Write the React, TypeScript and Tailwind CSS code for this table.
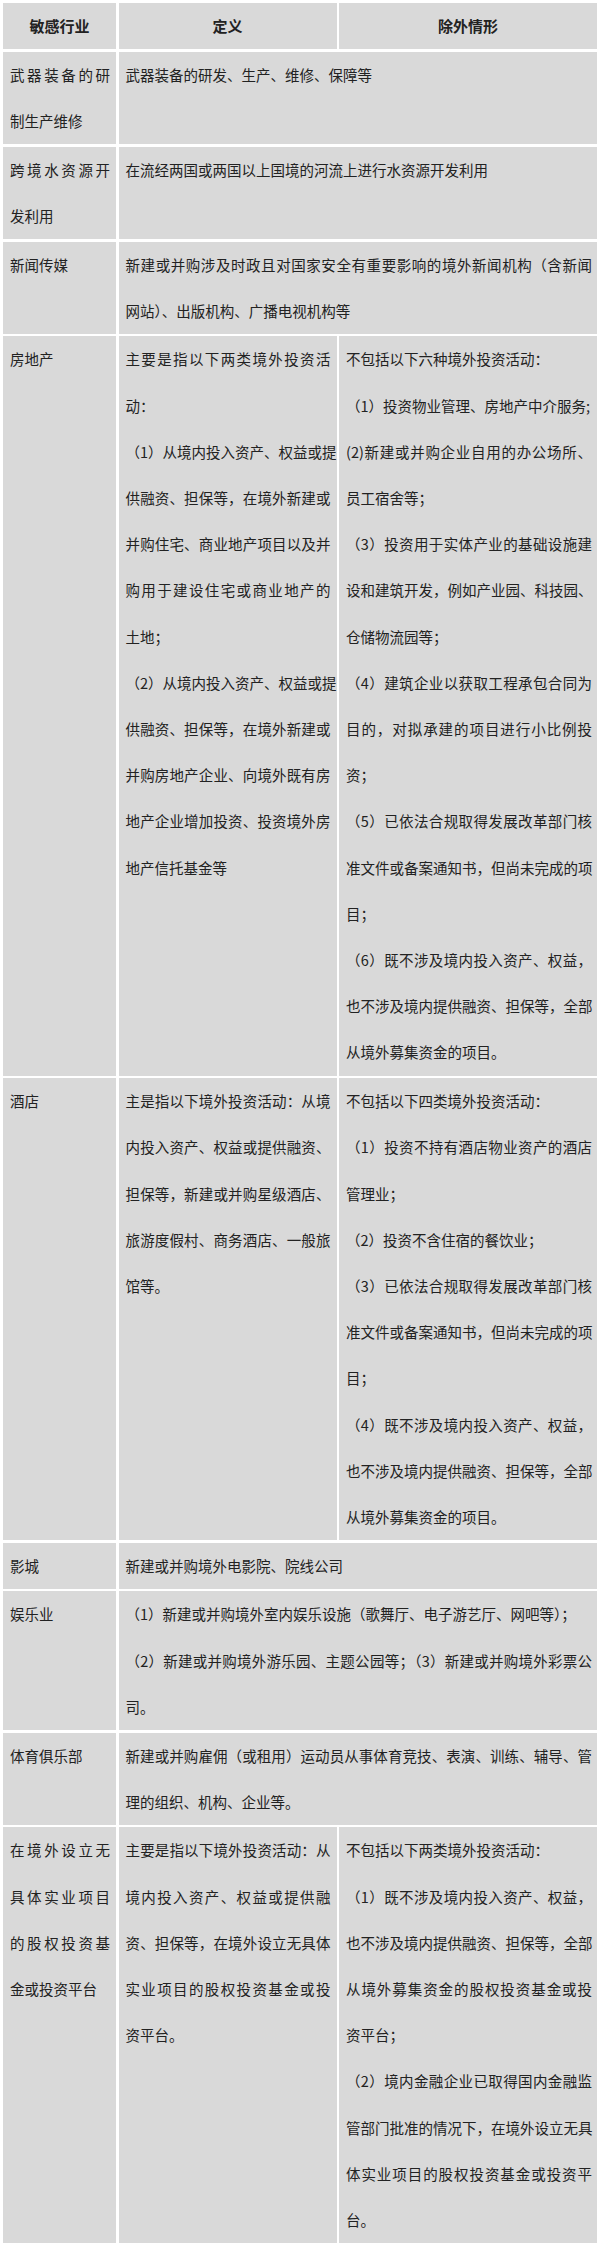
type Para = string[];

interface Row {
  industry: Para[];
  definition: Para[];
  // no exclusion column means the definition spans both columns
  exclusion?: Para[];
}

const rows: Row[] = [
  {
    industry: [["武器装备的研", "制生产维修"]],
    definition: [["武器装备的研发、生产、维修、保障等"]],
  },
  {
    industry: [["跨境水资源开", "发利用"]],
    definition: [["在流经两国或两国以上国境的河流上进行水资源开发利用"]],
  },
  {
    industry: [["新闻传媒"]],
    definition: [
      [
        "新建或并购涉及时政且对国家安全有重要影响的境外新闻机构（含新闻",
        "网站）、出版机构、广播电视机构等",
      ],
    ],
  },
  {
    industry: [["房地产"]],
    definition: [
      ["主要是指以下两类境外投资活", "动："],
      [
        "（1）从境内投入资产、权益或提",
        "供融资、担保等，在境外新建或",
        "并购住宅、商业地产项目以及并",
        "购用于建设住宅或商业地产的",
        "土地；",
      ],
      [
        "（2）从境内投入资产、权益或提",
        "供融资、担保等，在境外新建或",
        "并购房地产企业、向境外既有房",
        "地产企业增加投资、投资境外房",
        "地产信托基金等",
      ],
    ],
    exclusion: [
      ["不包括以下六种境外投资活动："],
      ["（1）投资物业管理、房地产中介服务;"],
      ["(2)新建或并购企业自用的办公场所、", "员工宿舍等；"],
      ["（3）投资用于实体产业的基础设施建", "设和建筑开发，例如产业园、科技园、", "仓储物流园等；"],
      ["（4）建筑企业以获取工程承包合同为", "目的，对拟承建的项目进行小比例投", "资；"],
      ["（5）已依法合规取得发展改革部门核", "准文件或备案通知书，但尚未完成的项", "目；"],
      ["（6）既不涉及境内投入资产、权益，", "也不涉及境内提供融资、担保等，全部", "从境外募集资金的项目。"],
    ],
  },
  {
    industry: [["酒店"]],
    definition: [
      [
        "主是指以下境外投资活动：从境",
        "内投入资产、权益或提供融资、",
        "担保等，新建或并购星级酒店、",
        "旅游度假村、商务酒店、一般旅",
        "馆等。",
      ],
    ],
    exclusion: [
      ["不包括以下四类境外投资活动："],
      ["（1）投资不持有酒店物业资产的酒店", "管理业；"],
      ["（2）投资不含住宿的餐饮业；"],
      ["（3）已依法合规取得发展改革部门核", "准文件或备案通知书，但尚未完成的项", "目；"],
      ["（4）既不涉及境内投入资产、权益，", "也不涉及境内提供融资、担保等，全部", "从境外募集资金的项目。"],
    ],
  },
  {
    industry: [["影城"]],
    definition: [["新建或并购境外电影院、院线公司"]],
  },
  {
    industry: [["娱乐业"]],
    definition: [
      ["（1）新建或并购境外室内娱乐设施（歌舞厅、电子游艺厅、网吧等）；"],
      ["（2）新建或并购境外游乐园、主题公园等；（3）新建或并购境外彩票公", "司。"],
    ],
  },
  {
    industry: [["体育俱乐部"]],
    definition: [
      ["新建或并购雇佣（或租用）运动员从事体育竞技、表演、训练、辅导、管", "理的组织、机构、企业等。"],
    ],
  },
  {
    industry: [["在境外设立无", "具体实业项目", "的股权投资基", "金或投资平台"]],
    definition: [
      [
        "主要是指以下境外投资活动：从",
        "境内投入资产、权益或提供融",
        "资、担保等，在境外设立无具体",
        "实业项目的股权投资基金或投",
        "资平台。",
      ],
    ],
    exclusion: [
      ["不包括以下两类境外投资活动："],
      ["（1）既不涉及境内投入资产、权益，", "也不涉及境内提供融资、担保等，全部", "从境外募集资金的股权投资基金或投", "资平台；"],
      ["（2）境内金融企业已取得国内金融监", "管部门批准的情况下，在境外设立无具", "体实业项目的股权投资基金或投资平", "台。"],
    ],
  },
];

function Lines({ paras }: { paras: Para[] }) {
  return (
    <>
      {paras.map((p, pi) => (
        <div key={pi}>
          {p.map((line, li) => (
            <div
              key={li}
              className={
                li < p.length - 1
                  ? "whitespace-nowrap text-justify [text-align-last:justify]"
                  : "whitespace-nowrap text-left"
              }
            >
              {line}
            </div>
          ))}
        </div>
      ))}
    </>
  );
}

export default function App() {
  return (
    <div className="min-h-[2248px] bg-white pl-[3px] pt-[3px] font-['Noto_Sans_CJK_SC','Microsoft_YaHei',sans-serif] text-[#222222]">
      <div className="grid w-[594px] grid-cols-[113px_218px_258px] gap-[2.5px] text-[14.5px] leading-[46.2px]">
        <div className="bg-[#d9d9d9] text-center text-[15px] font-bold">敏感行业</div>
        <div className="bg-[#d9d9d9] text-center text-[15px] font-bold">定义</div>
        <div className="bg-[#d9d9d9] text-center text-[15px] font-bold">除外情形</div>

        {rows.map((r, i) => (
          <div key={i} className="contents">
            <div className="bg-[#d9d9d9] pl-[7px] pr-[6px]">
              <Lines paras={r.industry} />
            </div>
            {r.exclusion ? (
              <>
                <div className="bg-[#d9d9d9] pl-[7px] pr-[6px]">
                  <Lines paras={r.definition} />
                </div>
                <div className="bg-[#d9d9d9] pl-[7px] pr-[5px]">
                  <Lines paras={r.exclusion} />
                </div>
              </>
            ) : (
              <div className="col-span-2 bg-[#d9d9d9] pl-[7px] pr-[5px]">
                <Lines paras={r.definition} />
              </div>
            )}
          </div>
        ))}
      </div>
    </div>
  );
}
